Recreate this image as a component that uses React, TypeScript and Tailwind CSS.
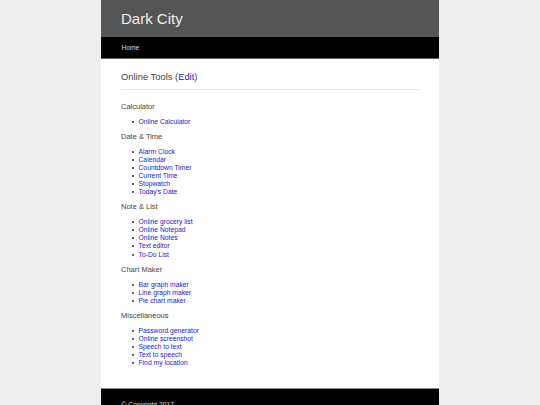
import React from "react";

const sections: { title: string; items: string[] }[] = [
  { title: "Calculator", items: ["Online Calculator"] },
  {
    title: "Date & Time",
    items: ["Alarm Clock", "Calendar", "Countdown Timer", "Current Time", "Stopwatch", "Today's Date"],
  },
  {
    title: "Note & List",
    items: ["Online grocery list", "Online Notepad", "Online Notes", "Text editor", "To-Do List"],
  },
  { title: "Chart Maker", items: ["Bar graph maker", "Line graph maker", "Pie chart maker"] },
  {
    title: "Miscellaneous",
    items: ["Password generator", "Online screenshot", "Speech to text", "Text to speech", "Find my location"],
  },
];

export default function App() {
  return (
    <div
      className="min-h-screen w-full bg-[#eeeeee]"
      style={{ fontFamily: '"Liberation Sans", Arial, sans-serif' }}
    >
      <div className="mx-auto w-[338px] bg-white">
        <header className="flex h-[37px] items-center bg-[#555555] pl-[20px]">
          <span className="text-[15px] leading-[18px] text-[#eeeeee]">Dark City</span>
        </header>
        <nav className="flex h-[21.5px] items-center border-b border-[#666666] bg-black pl-[20.5px] pt-[1px]">
          <a className="text-[6.6px] leading-[8px] text-[#dddddd]">Home</a>
        </nav>
        <main className="px-[20px] pt-[12.5px] pb-[21px]">
          <h1 className="text-[9.4px] leading-[12px] text-[#444444]">
            Online Tools (<a className="text-[#2222cc]">Edit</a>)
          </h1>
          <div className="mt-[6px] h-px bg-[#e6e6e6]" />
          <div className="mt-[13px] flex flex-col gap-[7px]">
            {sections.map((s) => (
              <React.Fragment key={s.title}>
                <div className="text-[7.5px] leading-[8px] text-[#444444]">{s.title}</div>
                <ul className="flex flex-col">
                  {s.items.map((it) => (
                    <li key={it} className="flex h-[8.05px] items-center pl-[11px]">
                      <span className="mr-[4.5px] h-[2px] w-[2px] rounded-full bg-[#333333]" />
                      <a className="text-[6.75px] leading-[8px] text-[#2222cc]">{it}</a>
                    </li>
                  ))}
                </ul>
              </React.Fragment>
            ))}
          </div>
        </main>
        <footer className="h-[30px] border-t border-[#888888] bg-black pl-[20.5px] pt-[12px]">
          <span className="block text-[6.75px] leading-[8px] text-[#dddddd]">© Copyright 2017</span>
        </footer>
      </div>
    </div>
  );
}
